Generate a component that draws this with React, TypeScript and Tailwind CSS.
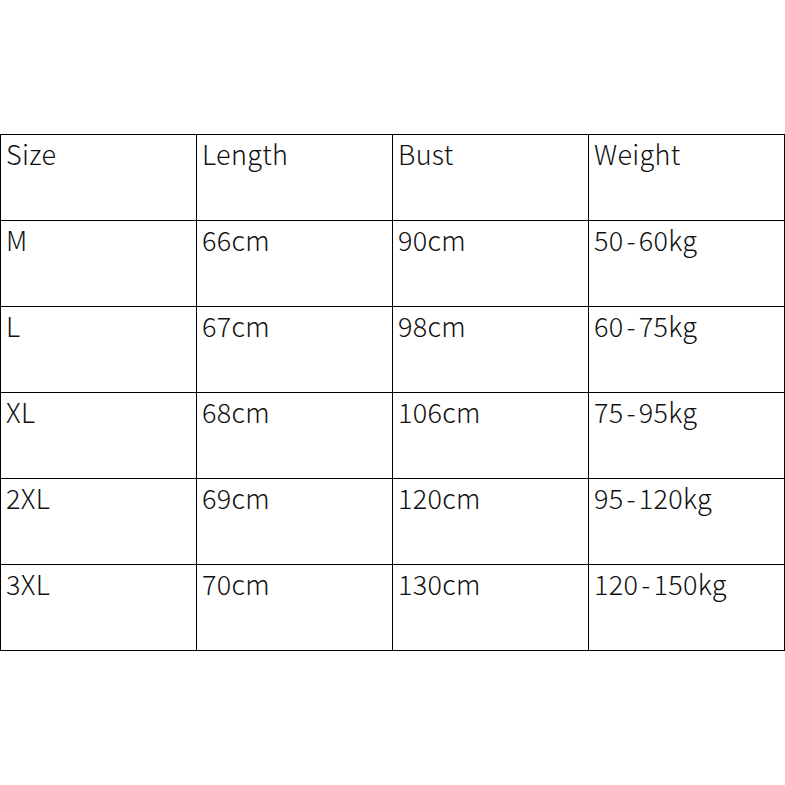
import React from 'react';

const rows = [
  ['Size', 'Length', 'Bust', 'Weight'],
  ['M', '66cm', '90cm', '50-60kg'],
  ['L', '67cm', '98cm', '60-75kg'],
  ['XL', '68cm', '106cm', '75-95kg'],
  ['2XL', '69cm', '120cm', '95-120kg'],
  ['3XL', '70cm', '130cm', '120-150kg'],
];

// the hyphen in the weight ranges sits with a little air round it
function Cell({ text }: { text: string }) {
  const parts = text.split('-');
  if (parts.length < 2) return <>{text}</>;
  return (
    <>
      {parts[0]}
      <span className="px-[3px]">-</span>
      {parts[1]}
    </>
  );
}

export default function App() {
  return (
    <div className="w-[785px] h-[785px] bg-white pt-[134px]">
      {/* size chart */}
      <div
        className="grid grid-cols-[repeat(4,196px)] w-[785px] border-l border-t border-black text-[#111] text-[27px] font-light leading-none"
        style={{ fontFamily: '"Noto Sans CJK SC", "Noto Sans", sans-serif' }}
      >
        {rows.flatMap((row, i) =>
          row.map((cell, j) => (
            <div key={`${i}-${j}`} className="h-[86px] border-r border-b border-black pl-[5px] pt-[5px] tracking-[0.3px] whitespace-nowrap">
              <Cell text={cell} />
            </div>
          ))
        )}
      </div>
    </div>
  );
}
